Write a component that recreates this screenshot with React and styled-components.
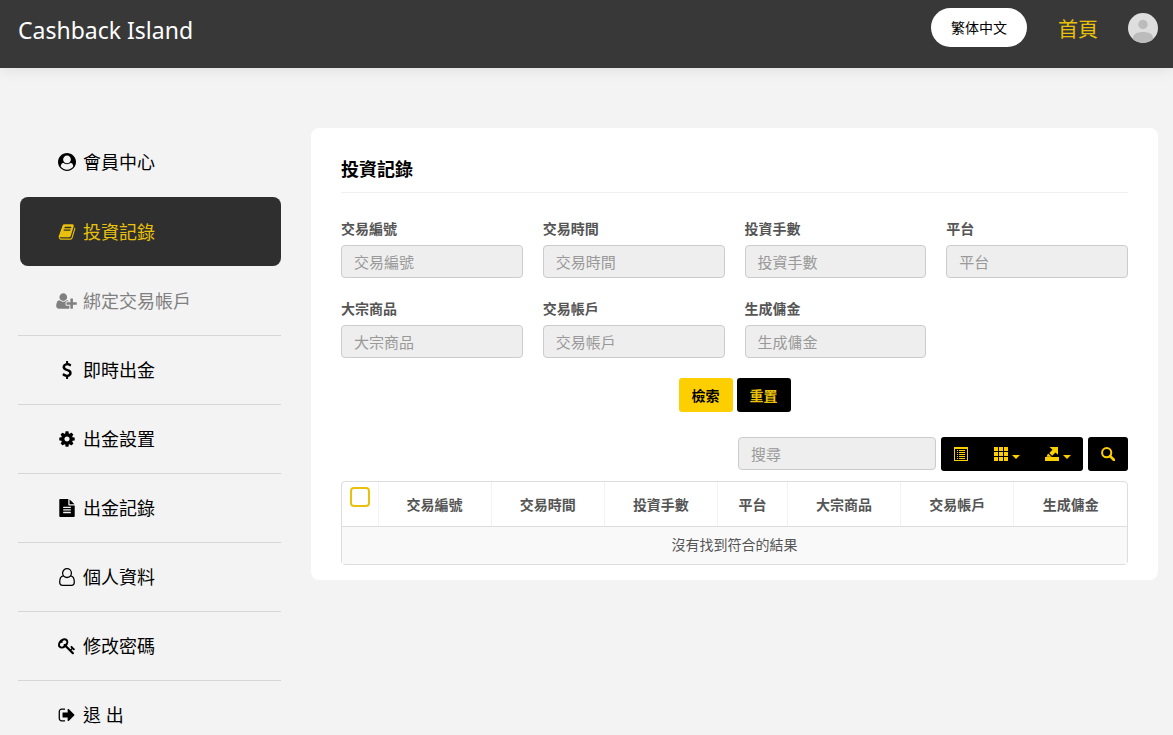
import React, { useState } from 'react';
import styled, { createGlobalStyle, css } from 'styled-components';

const colors = {
  bar: '#383838',
  active: '#2f2f2f',
  page: '#f3f3f3',
  gold: '#e9c10c',
  yellow: '#fecf00',
  text: '#555',
  line: '#ddd',
};

const GlobalStyle = createGlobalStyle`
  *, *::before, *::after {
    box-sizing: border-box;
  }

  body {
    margin: 0;
    background: ${colors.page};
    color: ${colors.text};
    font-family: "Open Sans", "Noto Sans CJK TC", sans-serif;
    font-size: 14px;
    line-height: 20px;
  }

  button, input {
    font-family: inherit;
  }
`;

const Header = styled.header`
  display: flex;
  align-items: center;
  height: 68px;
  padding: 0 15px 8px 18px;
  background: ${colors.bar};
  box-shadow: 0 0 15px rgba(0, 0, 0, 0.1);
`;

const Brand = styled.a`
  margin-right: auto;
  color: #fff;
  font-family: "Noto Sans", sans-serif;
  font-size: 23px;
  line-height: 32px;
  text-decoration: none;
`;

const LanguageButton = styled.button`
  height: 39px;
  margin-bottom: 6px;
  padding: 0 20px;
  border: 0;
  border-radius: 20px;
  background: #fff;
  color: #000;
  font-size: 14px;
`;

const HomeLink = styled.a`
  margin: 0 30px 0 31px;
  color: ${colors.gold};
  font-size: 20px;
  line-height: 28px;
  text-decoration: none;
`;

const AvatarButton = styled.button`
  display: block;
  width: 30px;
  height: 30px;
  margin-bottom: 4px;
  padding: 0;
  border: 0;
  border-radius: 50%;
  background: none;

  svg {
    display: block;
  }
`;

const Page = styled.div`
  display: flex;
  align-items: flex-start;
  gap: 30px;
  padding: 60px 15px 0 18px;
`;

const Sidebar = styled.nav`
  flex: 0 0 263px;
`;

const MenuList = styled.ul`
  margin: 0;
  padding: 0;
  list-style: none;
`;

const MenuItem = styled.li`
  height: 69px;
  border-bottom: 1px solid ${({ $plain }) => ($plain ? 'transparent' : '#d6d6d6')};
  ${({ $active }) => $active && css`
    height: 70px;
    padding: 0 0 0 2px;
  `}
`;

const MenuLink = styled.a`
  display: flex;
  align-items: center;
  gap: 5px;
  height: 68px;
  padding-left: 37px;
  color: ${({ $muted }) => ($muted ? '#808080' : '#000')};
  font-size: 18px;
  line-height: 26px;
  text-decoration: none;
  ${({ $active }) => $active && css`
    height: 69px;
    padding-left: 35px;
    border-radius: 8px;
    background: ${colors.active};
    color: ${colors.gold};
  `}
`;

const IconBox = styled.span`
  display: flex;
  justify-content: center;
  width: 23px;
`;

const Card = styled.main`
  flex: 1;
  min-width: 0;
  padding: 30px 30px 15px;
  border-radius: 8px;
  background: #fff;
`;

const CardTitle = styled.h1`
  margin: 0;
  padding-bottom: 12px;
  border-bottom: 1px solid #f0f0f0;
  color: #000;
  font-size: 18px;
  line-height: 22px;
`;

const SearchForm = styled.form`
  padding-top: 26px;
`;

const FieldGrid = styled.div`
  display: grid;
  grid-template-columns: repeat(4, 1fr);
  gap: 21px 20px;
`;

const Field = styled.div`
  label {
    display: block;
    margin-bottom: 6px;
    font-weight: 700;
  }
`;

const Input = styled.input`
  display: block;
  width: 100%;
  height: 33px;
  padding: 0 12px;
  border: 1px solid #ccc;
  border-radius: 4px;
  background: #eee;
  color: ${colors.text};
  font-size: 15px;

  &::placeholder {
    color: #999;
    opacity: 1;
  }
`;

const FormButtons = styled.div`
  display: flex;
  justify-content: center;
  gap: 4px;
  padding-top: 20px;
`;

const Button = styled.button`
  height: 34px;
  padding: 0 13px;
  border: 0;
  border-radius: 3px;
  background: ${({ $dark }) => ($dark ? '#000' : colors.yellow)};
  color: ${({ $dark }) => ($dark ? colors.gold : '#000')};
  font-size: 14px;
  font-weight: 700;
`;

const Toolbar = styled.div`
  display: flex;
  justify-content: flex-end;
  gap: 5px;
  padding: 25px 0 10px;
`;

const ToolbarSearch = styled.div`
  width: 198px;
`;

const ButtonGroup = styled.div`
  display: flex;
  overflow: hidden;
  border-radius: 3px;
`;

const ToolButton = styled.button`
  display: flex;
  align-items: center;
  justify-content: center;
  gap: 4px;
  width: ${({ $menu }) => ($menu ? 51 : 40)}px;
  height: 34px;
  padding: 0;
  border: 0;
  background: #000;
  color: ${colors.yellow};
`;

const Caret = styled.span`
  margin-top: 5px;
  border-top: 4px solid;
  border-right: 4px solid transparent;
  border-left: 4px solid transparent;
`;

const TableFrame = styled.div`
  border: 1px solid ${colors.line};
  border-radius: 4px;
`;

const Table = styled.table`
  width: 100%;
  border-collapse: collapse;
  text-align: center;

  th {
    height: 44px;
    padding: 2px 0 0;
    border-bottom: 1px solid ${colors.line};
    font-weight: 700;
  }

  th + th {
    border-left: 1px solid #f3f3f3;
  }

  td {
    height: 38px;
    padding: 0 8px;
    background: #f9f9f9;
  }
`;

const CheckCell = styled.th`
  width: 36px;
  vertical-align: top;
`;

const ColumnHead = styled.th`
  width: ${({ $narrow }) => ($narrow ? 70 : 113)}px;
`;

const Checkbox = styled.input`
  appearance: none;
  display: block;
  width: 20px;
  height: 20px;
  margin: 3px 0 0 8px;
  border: 2px solid ${colors.gold};
  border-radius: 4px;
  background: #fff;

  &:checked {
    background: ${colors.yellow};
  }
`;

const paths = {
  userCircle: 'M1523 1339q-22-155-87.5-257.5t-184.5-118.5q-67 74-159.5 115.5t-195.5 41.5-195.5-41.5-159.5-115.5q-119 16-184.5 118.5t-87.5 257.5q106 150 271 237.5t356 87.5 356-87.5 271-237.5zm-243-699q0-159-112.5-271.5t-271.5-112.5-271.5 112.5-112.5 271.5 112.5 271.5 271.5 112.5 271.5-112.5 112.5-271.5zm512 256q0 182-71 347.5t-190.5 286-285.5 191.5-349 71q-182 0-348-71t-286-191-191-286-71-348 71-348 191-286 286-191 348-71 348 71 286 191 191 286 71 348z',
  book: 'M1703 478q40 57 18 129l-275 906q-19 64-76.5 107.5t-122.5 43.5h-923q-77 0-148.5-53.5t-99.5-131.5q-24-67-2-127 0-4 3-27t4-37q1-8-3-21.5t-3-19.5q2-11 8-21t16.5-23.5 16.5-23.5q23-38 45-91.5t30-91.5q3-10 .5-30t-.5-28q3-11 17-28t17-23q21-36 42-92t25-90q1-9-2.5-32t.5-28q4-13 22-30.5t22-22.5q19-26 42.5-84.5t27.5-96.5q1-8-3-25.5t-2-26.5q2-8 9-18t18-23 17-21q8-12 16.5-30.5t15-35 16-36 19.5-32 26.5-23.5 36-11.5 47.5 5.5l-1 3q38-9 51-9h761q74 0 114 56t18 130l-274 906q-36 119-71.5 153.5t-128.5 34.5h-869q-27 0-38 15-11 16-1 43 24 70 144 70h923q29 0 56-15.5t35-41.5l300-987q7-22 5-57 38 15 59 43zm-1064 2q-4 13 2 22.5t20 9.5h608q13 0 25.5-9.5t16.5-22.5l21-64q4-13-2-22.5t-20-9.5h-608q-13 0-25.5 9.5t-16.5 22.5zm-83 256q-4 13 2 22.5t20 9.5h608q13 0 25.5-9.5t16.5-22.5l21-64q4-13-2-22.5t-20-9.5h-608q-13 0-25.5 9.5t-16.5 22.5z',
  userPlus: 'M704 896q-159 0-271.5-112.5t-112.5-271.5 112.5-271.5 271.5-112.5 271.5 112.5 112.5 271.5-112.5 271.5-271.5 112.5zm960 128h352q13 0 22.5 9.5t9.5 22.5v192q0 13-9.5 22.5t-22.5 9.5h-352v352q0 13-9.5 22.5t-22.5 9.5h-192q-13 0-22.5-9.5t-9.5-22.5v-352h-352q-13 0-22.5-9.5t-9.5-22.5v-192q0-13 9.5-22.5t22.5-9.5h352v-352q0-13 9.5-22.5t22.5-9.5h192q13 0 22.5 9.5t9.5 22.5v352zm-736 224q0 52 38 90t90 38h256v238q-68 50-171 50h-874q-121 0-194-69t-73-190q0-53 3.5-103.5t14-109 26.5-108.5 43-97.5 62-81 85.5-53.5 111.5-20q19 0 39 17 79 61 154.5 91.5t164.5 30.5 164.5-30.5 154.5-91.5q20-17 39-17 132 0 217 96h-223q-52 0-90 38t-38 90v192z',
  dollar: 'M1362 1185q0 153-99.5 263.5t-258.5 136.5v175q0 14-9 23t-23 9h-135q-13 0-22.5-9.5t-9.5-22.5v-175q-66-9-127.5-31t-101.5-44.5-74-48-46.5-37.5-17.5-18q-17-21-2-41l103-135q7-10 23-12 15-2 24 9l2 2q113 99 243 125 37 8 74 8 81 0 142.5-43t61.5-122q0-28-15-53t-33.5-42-58.5-37.5-66-32-80-32.5q-39-16-61.5-25t-61.5-26.5-62.5-31-56.5-35.5-53.5-42.5-43.5-49-35.5-58-21-66.5-8.5-78q0-138 98-242t255-134v-180q0-13 9.5-22.5t22.5-9.5h135q14 0 23 9t9 23v176q57 6 110.5 23t87 33.5 63.5 37.5 39 29 15 14q17 18 5 38l-81 146q-8 15-23 16-14 3-27-7-3-3-14.5-12t-39-26.5-58.5-32-74.5-26-85.5-11.5q-95 0-155 43t-60 111q0 26 8.5 48t29.5 41.5 39.5 33 56 31 60.5 27 70 27.5q53 20 81 31.5t76 35 75.5 42.5 62 50 53 63.5 31.5 76.5 13 94z',
  cog: 'M1152 896q0-106-75-181t-181-75-181 75-75 181 75 181 181 75 181-75 75-181zm512-109v222q0 12-8 23t-20 13l-185 28q-19 54-39 91 35 50 107 138 10 12 10 25t-9 23q-27 37-99 108t-94 71q-12 0-26-9l-138-108q-44 23-91 38-16 136-29 186-7 28-36 28h-222q-14 0-24.5-8.5t-11.5-21.5l-28-184q-49-16-90-37l-141 107q-10 9-25 9-14 0-25-11-126-114-165-168-7-10-7-23 0-12 8-23 15-21 51-66.5t54-70.5q-27-50-41-99l-183-27q-13-2-21-12.5t-8-23.5v-222q0-12 8-23t19-13l186-28q14-46 39-92-40-57-107-138-10-12-10-24 0-10 9-23 26-36 98.5-107.5t94.5-71.5q13 0 26 10l138 107q44-23 91-38 16-136 29-186 7-28 36-28h222q14 0 24.5 8.5t11.5 21.5l28 184q49 16 90 37l142-107q9-9 24-9 13 0 25 10 129 119 165 170 7 8 7 22 0 12-8 23-15 21-51 66.5t-54 70.5q26 50 41 98l183 28q13 2 21 12.5t8 23.5z',
  fileText: 'M1596 476q14 14 28 36h-472v-472q22 14 36 28zm-476 164h544v1056q0 40-28 68t-68 28h-1344q-40 0-68-28t-28-68v-1600q0-40 28-68t68-28h800v544q0 40 28 68t68 28zm160 736v-64q0-14-9-23t-23-9h-704q-14 0-23 9t-9 23v64q0 14 9 23t23 9h704q14 0 23-9t9-23zm0-256v-64q0-14-9-23t-23-9h-704q-14 0-23 9t-9 23v64q0 14 9 23t23 9h704q14 0 23-9t9-23zm0-256v-64q0-14-9-23t-23-9h-704q-14 0-23 9t-9 23v64q0 14 9 23t23 9h704q14 0 23-9t9-23z',
  key: 'M832 512q0-80-56-136t-136-56-136 56-56 136q0 42 19 83-41-19-83-19-80 0-136 56t-56 136 56 136 136 56 136-56 56-136q0-42-19-83 41 19 83 19 80 0 136-56t56-136zm851 704q0 17-49 66t-66 49q-9 0-28.5-16t-36.5-33-38.5-40-24.5-26l-96 96 220 220q28 28 28 68 0 42-39 81t-81 39q-40 0-68-28l-671-671q-176 131-365 131-163 0-265.5-102.5t-102.5-265.5q0-160 95-313t248-248 313-95q163 0 265.5 102.5t102.5 265.5q0 189-131 365l355 355 96-96q-3-3-26-24.5t-40-38.5-33-36.5-16-28.5q0-17 49-66t66-49q13 0 23 10 6 6 46 44.5t82 79.5 86.5 86 73 78 28.5 41z',
  signOut: 'M704 1440q0 4 1 20t.5 26.5-3 23.5-10 19.5-20.5 6.5h-320q-119 0-203.5-84.5t-84.5-203.5v-704q0-119 84.5-203.5t203.5-84.5h320q13 0 22.5 9.5t9.5 22.5q0 4 1 20t.5 26.5-3 23.5-10 19.5-20.5 6.5h-320q-66 0-113 47t-47 113v704q0 66 47 113t113 47h312l11.5 1 11.5 3 8 5.5 7 9 2 13.5zm928-544q0 26-19 45l-544 544q-19 19-45 19t-45-19-19-45v-288h-448q-26 0-45-19t-19-45v-384q0-26 19-45t45-19h448v-288q0-26 19-45t45-19 45 19l544 544q19 19 19 45z',
};

const Icon = ({ name }) => {
  if (name === 'userOutline') {
    return (
      <svg width="18" height="18" viewBox="0 0 18 18" fill="none" stroke="currentColor" strokeWidth="1.3" aria-hidden="true">
        <circle cx="9" cy="5.1" r="4.4" />
        <path d="M5.3 7.8C2.700 8.200 1.700 11 1.700 14C1.700 16 2.900 17.300 4.600 17.300H13.400C15.100 17.300 16.300 16 16.300 14C16.300 11 15.300 8.200 12.700 7.800" />
      </svg>
    );
  }
  const width = name === 'userPlus' ? 2048 : 1792;
  return (
    <svg width={name === 'userPlus' ? 21 : 18} height="18" viewBox={`0 0 ${width} 1792`} fill="currentColor" aria-hidden="true">
      <path d={paths[name]} />
    </svg>
  );
};

const ListIcon = () => (
  <svg width="14" height="14" viewBox="0 0 14 14" fill="currentColor" aria-hidden="true">
    <path fillRule="evenodd" d="M0 0h14v14H0zM1 2v11h12V2z" />
    <path d="M3 3h1v1H3zM5 3h6v1H5zM3 5h1v1H3zM5 5h6v1H5zM3 7h1v1H3zM5 7h6v1H5zM3 9h1v1H3zM5 9h6v1H5zM3 11h1v1H3zM5 11h6v1H5z" />
  </svg>
);

const GridIcon = () => (
  <svg width="14" height="14" viewBox="0 0 14 14" fill="currentColor" aria-hidden="true">
    <path d="M0 0h4v4H0zM5 0h4v4H5zM10 0h4v4h-4zM0 5h4v4H0zM5 5h4v4H5zM10 5h4v4h-4zM0 10h4v4H0zM5 10h4v4H5zM10 10h4v4h-4z" />
  </svg>
);

const ExportIcon = () => (
  <svg width="14" height="14" viewBox="0 0 14 14" fill="currentColor" aria-hidden="true">
    <path d="M4.5 0H13v7.7L10.5 5.5 7.2 8.8 4.300 6l3.200-3.300zM3 6.600l3.700 3.200H1.500zM0 10h14v4H0z" />
  </svg>
);

const SearchIcon = () => (
  <svg width="14" height="14" viewBox="0 0 14 14" fill="none" stroke="currentColor" aria-hidden="true">
    <circle cx="5.7" cy="5.7" r="4.6" strokeWidth="2" />
    <path d="M9 9l4 4" strokeWidth="2.6" strokeLinecap="round" />
  </svg>
);

const menu = [
  { icon: 'userCircle', label: '會員中心', plain: true },
  { icon: 'book', label: '投資記錄', active: true, plain: true },
  { icon: 'userPlus', label: '綁定交易帳戶', muted: true },
  { icon: 'dollar', label: '即時出金' },
  { icon: 'cog', label: '出金設置' },
  { icon: 'fileText', label: '出金記錄' },
  { icon: 'userOutline', label: '個人資料' },
  { icon: 'key', label: '修改密碼' },
  { icon: 'signOut', label: '退 出' },
];

const fields = [
  { name: 'ticket', label: '交易編號' },
  { name: 'time', label: '交易時間' },
  { name: 'lots', label: '投資手數' },
  { name: 'platform', label: '平台', narrow: true },
  { name: 'symbol', label: '大宗商品' },
  { name: 'account', label: '交易帳戶' },
  { name: 'commission', label: '生成傭金' },
];

const App = () => {
  const [allSelected, setAllSelected] = useState(false);

  return (
    <>
      <GlobalStyle />
      <Header>
        <Brand href="#">Cashback Island</Brand>
        <LanguageButton type="button">繁体中文</LanguageButton>
        <HomeLink href="#">首頁</HomeLink>
        <AvatarButton type="button" aria-label="會員">
          <svg width="30" height="30" viewBox="0 0 30 30">
            <clipPath id="avatar">
              <circle cx="15" cy="15" r="15" />
            </clipPath>
            <g clipPath="url(#avatar)">
              <path d="M0 0h30v30H0z" fill="#dedede" />
              <circle cx="15" cy="11.5" r="4.7" fill="#bcbcbc" />
              <path d="M5 30v-5c0-4 4-6 10-6s10 2 10 6v5z" fill="#bcbcbc" />
            </g>
          </svg>
        </AvatarButton>
      </Header>

      <Page>
        <Sidebar>
          <MenuList>
            {menu.map(({ icon, label, active, muted, plain }) => (
              <MenuItem key={icon} $active={active} $plain={plain}>
                <MenuLink href="#" $active={active} $muted={muted}>
                  <IconBox><Icon name={icon} /></IconBox>
                  {label}
                </MenuLink>
              </MenuItem>
            ))}
          </MenuList>
        </Sidebar>

        <Card>
          <CardTitle>投資記錄</CardTitle>

          <SearchForm onSubmit={(e) => e.preventDefault()}>
            <FieldGrid>
              {fields.map(({ name, label }) => (
                <Field key={name}>
                  <label htmlFor={name}>{label}</label>
                  <Input id={name} name={name} type="text" placeholder={label} />
                </Field>
              ))}
            </FieldGrid>
            <FormButtons>
              <Button type="submit">檢索</Button>
              <Button type="reset" $dark>重置</Button>
            </FormButtons>
          </SearchForm>

          <Toolbar>
            <ToolbarSearch>
              <Input type="text" placeholder="搜尋" aria-label="搜尋" />
            </ToolbarSearch>
            <ButtonGroup>
              <ToolButton type="button" aria-label="切換"><ListIcon /></ToolButton>
              <ToolButton type="button" aria-label="列" $menu><GridIcon /><Caret /></ToolButton>
              <ToolButton type="button" aria-label="導出" $menu><ExportIcon /><Caret /></ToolButton>
            </ButtonGroup>
            <ButtonGroup>
              <ToolButton type="button" aria-label="搜索"><SearchIcon /></ToolButton>
            </ButtonGroup>
          </Toolbar>

          <TableFrame>
            <Table>
              <thead>
                <tr>
                  <CheckCell>
                    <Checkbox
                      type="checkbox"
                      aria-label="全選"
                      checked={allSelected}
                      onChange={(e) => setAllSelected(e.target.checked)}
                    />
                  </CheckCell>
                  {fields.map(({ name, label, narrow }) => (
                    <ColumnHead key={name} $narrow={narrow}>{label}</ColumnHead>
                  ))}
                </tr>
              </thead>
              <tbody>
                <tr>
                  <td colSpan={fields.length + 1}>沒有找到符合的結果</td>
                </tr>
              </tbody>
            </Table>
          </TableFrame>
        </Card>
      </Page>
    </>
  );
};

export default App;
